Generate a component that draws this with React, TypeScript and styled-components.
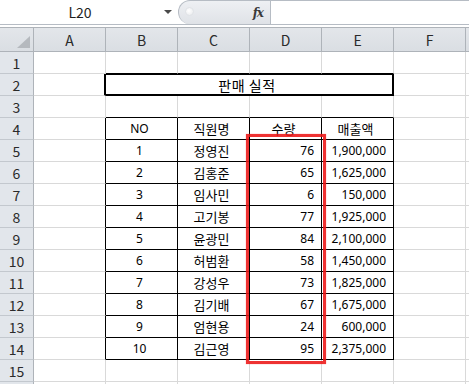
import React from "react";
import styled, { createGlobalStyle } from "styled-components";

const GlobalStyle = createGlobalStyle`
  html, body { margin: 0; padding: 0; background: #ffffff; }
  body { width: 469px; height: 384px; overflow: hidden; }
  * { box-sizing: border-box; }
`;

const FONT = `"Noto Sans CJK KR", "Malgun Gothic", "Noto Sans", sans-serif`;
const NUM_FONT = `"Noto Sans", "Noto Sans CJK KR", sans-serif`;

const Page = styled.div`
  width: 469px;
  height: 384px;
  overflow: hidden;
  background: #ffffff;
  font-family: ${FONT};
  color: #000;
`;

const TopBar = styled.div`
  display: flex;
  height: 25px;
  border-bottom: 1px solid #b6bcc4;
`;

const NameBox = styled.div`
  width: 178px;
  display: flex;
  align-items: center;
  background: #ffffff;
`;

const NameText = styled.div`
  width: 160px;
  text-align: center;
  font-size: 14px;
  color: #1e1e1e;
  line-height: 24px;
`;

const DropArrow = styled.div`
  width: 0;
  height: 0;
  border-left: 4px solid transparent;
  border-right: 4px solid transparent;
  border-top: 4px solid #4a4a4a;
  margin-left: 4px;
`;

const FxArea = styled.div`
  width: 93px;
  height: 24px;
  display: flex;
  align-items: center;
  justify-content: space-between;
  padding: 0 7px 0 6px;
  background: linear-gradient(#eef0f3, #dfe2e7);
  border: 1px solid #b6bcc4;
  border-bottom: none;
  border-radius: 12px 0 0 12px;
`;

const Handle = styled.div`
  width: 9px;
  height: 9px;
  border-radius: 50%;
  background: radial-gradient(circle at 40% 40%, #ffffff, #e6e8eb);
  border: 1px solid #e0e3e7;
  margin-top: -3px;
`;

const FxLabel = styled.span`
  font-family: "DejaVu Serif", "Liberation Serif", serif;
  font-style: italic;
  font-weight: bold;
  font-size: 12px;
  color: #3a3a3a;
  letter-spacing: -1px;
`;

const FormulaInput = styled.div`
  flex: 1;
  background: #ffffff;
  border-top: 1px solid #b6bcc4;
`;

const Gap = styled.div`
  height: 2px;
  background: #ffffff;
`;

const SheetArea = styled.div`
  position: relative;
`;

const Grid = styled.div`
  display: grid;
  grid-template-columns: 34px repeat(6, 72px) 1fr;
  grid-template-rows: 25px;
  grid-auto-rows: 22px;
`;

type Edge = "grid" | "black" | "thick";
type Kind = "kr" | "num" | "title";

const edgeCss = (e: Edge) =>
  e === "black" ? "1px solid #000" : e === "thick" ? "2px solid #000" : "1px solid #d9d9d9";

const Cell = styled.div<{
  $right: Edge;
  $bottom: Edge;
  $top?: Edge;
  $align?: "left" | "center" | "right";
  $span?: number;
  $kind?: Kind;
}>`
  display: flex;
  align-items: center;
  justify-content: ${(p) =>
    p.$align === "right" ? "flex-end" : p.$align === "center" ? "center" : "flex-start"};
  padding: 0 7px 0 3px;
  font-family: ${(p) => (p.$kind === "num" ? NUM_FONT : FONT)};
  font-size: ${(p) => (p.$kind === "num" ? "12px" : p.$kind === "title" ? "14px" : "13px")};
  letter-spacing: ${(p) => (p.$kind === "title" ? "0.6px" : "0")};
  white-space: nowrap;
  overflow: hidden;
  border-right: ${(p) => edgeCss(p.$right)};
  border-bottom: ${(p) => edgeCss(p.$bottom)};
  border-top: ${(p) => (p.$top ? edgeCss(p.$top) : "none")};
  grid-column: ${(p) => (p.$span ? `span ${p.$span}` : "auto")};
`;

const ColHead = styled.div`
  display: flex;
  align-items: center;
  justify-content: center;
  background: linear-gradient(#e3e6ea, #dadee3);
  border-top: 1px solid #aeb3b9;
  border-right: 1px solid #aeb3b9;
  border-bottom: 1px solid #aeb3b9;
  font-size: 14px;
  color: #2a2a2a;
`;

const Corner = styled(ColHead)`
  align-items: flex-end;
  justify-content: flex-end;
  padding: 0 3px 3px 0;
`;

const RowHead = styled.div`
  display: flex;
  align-items: center;
  justify-content: center;
  background: #e2e6eb;
  border-right: 1px solid #aeb3b9;
  border-bottom: 1px solid #c3c8ce;
  font-size: 14px;
  color: #2a2a2a;
`;

const Highlight = styled.div`
  position: absolute;
  left: 246px;
  top: 107px;
  width: 80px;
  height: 230px;
  border: 3px solid rgba(236, 22, 22, 0.88);
  box-shadow: 0 0 1px rgba(255, 60, 60, 0.6);
  pointer-events: none;
`;

const cols = ["A", "B", "C", "D", "E", "F", ""];

const data: [string, string, string, string][] = [
  ["1", "정영진", "76", "1,900,000"],
  ["2", "김홍준", "65", "1,625,000"],
  ["3", "임사민", "6", "150,000"],
  ["4", "고기봉", "77", "1,925,000"],
  ["5", "윤광민", "84", "2,100,000"],
  ["6", "허범환", "58", "1,450,000"],
  ["7", "강성우", "73", "1,825,000"],
  ["8", "김기배", "67", "1,675,000"],
  ["9", "엄현용", "24", "600,000"],
  ["10", "김근영", "95", "2,375,000"],
];

type Content = { text: string; align: "left" | "center" | "right"; kind?: Kind };

function cellContent(r: number, c: number): Content {
  if (r === 4) {
    if (c === 1) return { text: "NO", align: "center", kind: "num" };
    const h = ["", "", "직원명", "수량", "매출액"];
    return { text: h[c] || "", align: "center", kind: "kr" };
  }
  if (r >= 5 && r <= 14) {
    const d = data[r - 5];
    if (c === 1) return { text: d[0], align: "center", kind: "num" };
    if (c === 2) return { text: d[1], align: "center", kind: "kr" };
    if (c === 3) return { text: d[2], align: "right", kind: "num" };
    if (c === 4) return { text: d[3], align: "right", kind: "num" };
  }
  return { text: "", align: "left" };
}

function rightEdge(r: number, c: number): Edge {
  if (r === 2 && c === 0) return "thick";
  if (r >= 4 && r <= 14 && c >= 0 && c <= 4) return "black";
  return "grid";
}

function bottomEdge(r: number, c: number): Edge {
  if (r === 1 && c >= 1 && c <= 4) return "black";
  if (r >= 3 && r <= 14 && c >= 1 && c <= 4) return "black";
  return "grid";
}

export default function App() {
  const rows: React.ReactNode[] = [];
  for (let r = 1; r <= 16; r++) {
    rows.push(<RowHead key={`h${r}`}>{r <= 15 ? r : ""}</RowHead>);
    for (let c = 0; c < cols.length; c++) {
      if (r === 2 && c >= 1 && c <= 4) {
        if (c === 1) {
          rows.push(
            <Cell
              key={`c${r}-${c}`}
              $span={4}
              $right="thick"
              $bottom="thick"
              $top="black"
              $align="center"
              $kind="title"
            >
              판매 실적
            </Cell>
          );
        }
        continue;
      }
      const { text, align, kind } = cellContent(r, c);
      rows.push(
        <Cell
          key={`c${r}-${c}`}
          $right={rightEdge(r, c)}
          $bottom={bottomEdge(r, c)}
          $align={align}
          $kind={kind}
        >
          {text}
        </Cell>
      );
    }
  }

  return (
    <Page>
      <GlobalStyle />
      <TopBar>
        <NameBox>
          <NameText>L20</NameText>
          <DropArrow />
        </NameBox>
        <FxArea>
          <Handle />
          <FxLabel>fx</FxLabel>
        </FxArea>
        <FormulaInput />
      </TopBar>
      <Gap />
      <SheetArea>
        <Grid>
          <Corner>
            <svg width="13" height="12" viewBox="0 0 13 12">
              <polygon points="13,0 13,12 0,12" fill="#b5b9be" />
            </svg>
          </Corner>
          {cols.map((l, i) => (
            <ColHead key={`col${i}`}>{l}</ColHead>
          ))}
          {rows}
        </Grid>
        <Highlight />
      </SheetArea>
    </Page>
  );
}
